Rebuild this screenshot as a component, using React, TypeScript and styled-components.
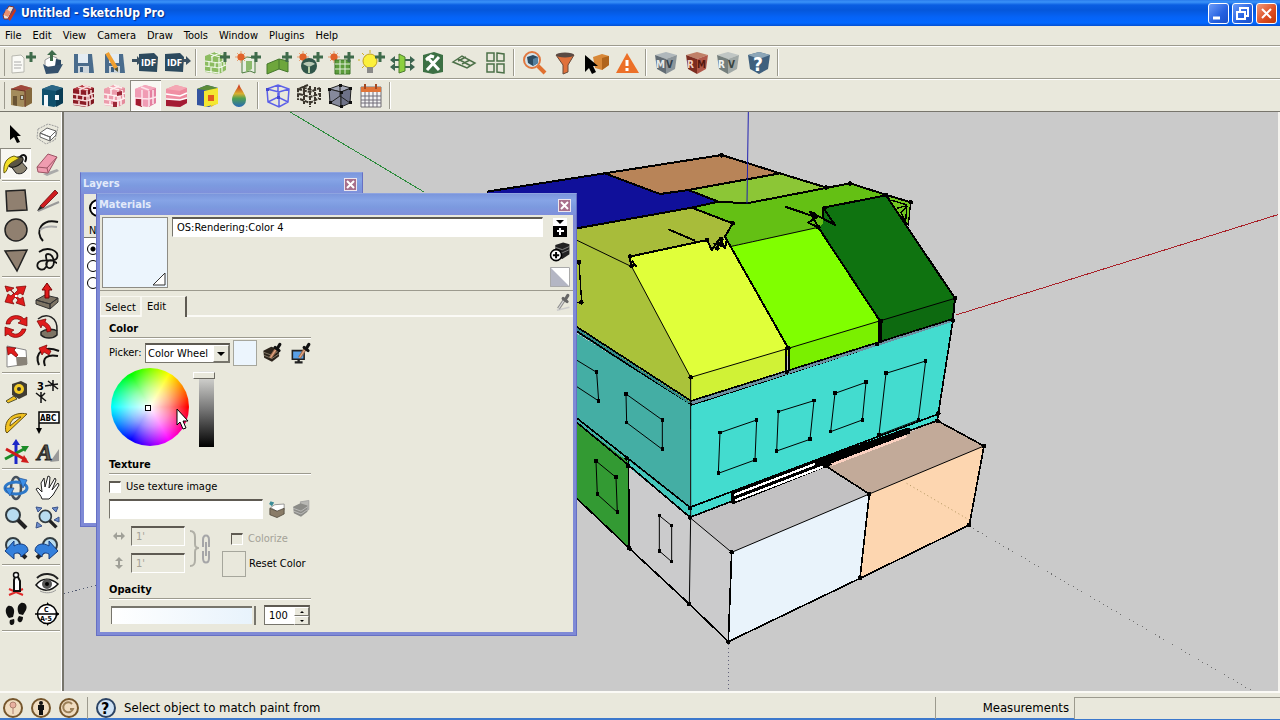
import React, { ReactNode } from "react";
import styled, { createGlobalStyle, css } from "styled-components";

const face = "#e9e8dc";
const shade = "#9c9a8e";
const ui = `"DejaVu Sans Condensed", "DejaVu Sans", sans-serif`;

const GlobalStyle = createGlobalStyle`
  *, *::before, *::after { box-sizing: border-box; }
  body { margin: 0; background: ${face}; font-family: ${ui}; font-size: 11px; line-height: 14px; color: #000; }
  button, input, select { font: inherit; color: inherit; margin: 0; }
  svg { display: block; }
`;

/* ---------- window frame ---------- */
const AppWindow = styled.div`
  display: flex;
  flex-direction: column;
  min-height: 100vh;
  border-bottom: 2px solid #3c78cc;
`;
const TitleBar = styled.header`
  display: flex;
  align-items: center;
  gap: 4px;
  height: 26px;
  padding: 0 3px 0 1px;
  background: linear-gradient(#2a7cec 0, #3a92f8 2px, #0a5ee2 5px, #0557da 10px, #0563f6 17px, #0268ff 23px, #0550d0 26px);
`;
const AppTitle = styled.h1`
  flex: 1;
  margin: 0;
  font-size: 12px;
  line-height: 18px;
  font-weight: bold;
  color: #fff;
  text-shadow: 1px 1px 1px #0a2a80;
`;
const CaptionButtons = styled.div`
  display: flex;
  gap: 3px;
`;
const CaptionButton = styled.button<{ $danger?: boolean }>`
  width: 21px;
  height: 21px;
  padding: 0;
  border: 1px solid #fff;
  border-radius: 3px;
  background: ${(p) => (p.$danger ? "linear-gradient(135deg, #f09a7c, #dc4c20 60%, #c03808)" : "linear-gradient(135deg, #6c9cf8, #2460e0 60%, #1c50c8)")};
`;
const MenuBar = styled.nav`
  display: flex;
  align-items: center;
  gap: 11px;
  height: 19px;
  padding-left: 5px;
`;
const MenuItem = styled.button`
  padding: 0;
  border: 0;
  background: none;
  line-height: 14px;
`;
const Toolbar = styled.div`
  display: flex;
  height: 33px;
  padding-left: 4px;
  border-top: 1px solid ${shade};
  box-shadow: inset 0 1px #fff;
  padding-top: 1px;
`;
const Grip = styled.span`
  width: 2px;
  margin: 2px 0;
  border-left: 1px solid ${shade};
`;
const ToolSeparator = styled.span`
  width: 8px;
  margin: 2px 0;
  background: linear-gradient(90deg, transparent 3px, ${shade} 3px, ${shade} 4px, #fff 4px, #fff 5px, transparent 5px);
`;
const ToolButton = styled.button<{ $pressed?: boolean }>`
  display: grid;
  place-items: center;
  width: 31px;
  height: 31px;
  padding: 0;
  border: 0;
  background: none;
  ${(p) =>
    p.$pressed &&
    css`
      background: #f8f7f2;
      box-shadow: inset 1px 1px #8c8a80, inset -1px -1px #fff;
    `}
`;
const Workspace = styled.main`
  flex: 1;
  display: flex;
  border-top: 1px solid #77756c;
`;
const Sidebar = styled.aside`
  width: 64px;
  padding-top: 6px;
  border-right: 2px solid #77756c;
  background: linear-gradient(90deg, transparent 61px, #fff 61px);
`;
const ToolGrid = styled.div`
  display: grid;
  grid-template-columns: 31px 31px;
  grid-auto-rows: 30px;
  width: 62px;
  margin-bottom: 6px;
  position: relative;
  &::after {
    content: "";
    position: absolute;
    left: 2px;
    right: 2px;
    bottom: -4px;
    height: 2px;
    background: ${shade};
    border-bottom: 1px solid #fff;
  }
`;
const Viewport = styled.section`
  position: relative;
  flex: 1;
  min-width: 0;
  overflow: hidden;
  background: #cacaca;
  border-right: 2px solid #f4f3ee;
`;
const Scene = styled.svg`
  position: absolute;
  inset: 0;
  width: 100%;
  height: 100%;
`;

/* ---------- floating panels ---------- */
const Panel = styled.section<{ $x: number; $y: number; $w: number; $h: number }>`
  position: absolute;
  left: ${(p) => p.$x}px;
  top: ${(p) => p.$y}px;
  width: ${(p) => p.$w}px;
  height: ${(p) => p.$h}px;
  display: flex;
  flex-direction: column;
  padding: 0 3px 3px;
  border: 1px solid #6670c4;
  border-top-color: #8fa4e0;
  background: #7f8ad6;
`;
const PanelTitle = styled.header`
  flex: none;
  display: flex;
  align-items: center;
  justify-content: space-between;
  height: 21px;
  margin: 0 -3px;
  padding: 1px 5px 0 2px;
  background: linear-gradient(#7b96dc, #86a4e6 30%, #7c9adf 60%, #7f8fdb);
`;
const PanelHeading = styled.h2`
  margin: 0;
  font-size: 11px;
  line-height: 16px;
  color: #e2eafa;
`;
const PanelClose = styled.button`
  display: grid;
  place-items: center;
  width: 13px;
  height: 13px;
  padding: 0;
  border: 1px solid #eee6ee;
  background: #a8708c;
`;
const LayersBody = styled.div`
  flex: 1;
  background: #fff;
`;
const LayersTools = styled.div`
  height: 29px;
  padding: 5px;
  background: ${face};
`;
const RoundButton = styled.button`
  display: grid;
  place-items: center;
  width: 18px;
  height: 18px;
  padding: 0;
  border: 2px solid #000;
  border-radius: 50%;
  background: #fff;
`;
const LayersHead = styled.div`
  height: 15px;
  padding: 0 5px;
  line-height: 15px;
  background: ${face};
  border-bottom: 1px solid #77756c;
`;
const LayerRow = styled.label`
  display: flex;
  height: 17px;
  padding: 5px 3px 0;
`;
const LayerRadio = styled.input`
  appearance: none;
  width: 12px;
  height: 12px;
  border: 1px solid #000;
  border-radius: 50%;
  background: #fff;
  &:checked { background: radial-gradient(circle, #000 2px, #fff 3px); }
`;
const MaterialsBody = styled.form`
  flex: 1;
  background: ${face};
`;
const MaterialHead = styled.div`
  display: flex;
  gap: 4px;
  height: 76px;
  padding: 2px;
  border-bottom: 1px solid ${shade};
`;
const MaterialPreview = styled.div`
  width: 66px;
  height: 71px;
  display: flex;
  align-items: flex-end;
  justify-content: flex-end;
  border: 1px solid #8e8c84;
  background: #ecf5fd;
`;
const TextField = styled.input<{ $w?: number }>`
  ${(p) => (p.$w ? `width: ${p.$w}px;` : "flex: 1; min-width: 0;")}
  height: 20px;
  padding: 0 4px;
  border: 1px solid #fff;
  border-top: 2px solid #5e5a52;
  border-left: 1px solid #77756c;
  border-radius: 0;
  background: #fff;
  &:disabled { background: ${face}; color: #a4a298; }
`;
const IconStack = styled.div`
  display: flex;
  flex-direction: column;
  align-items: center;
  gap: 4px;
  width: 22px;
  margin-left: 2px;
`;
const IconButton = styled.button`
  display: grid;
  place-items: center;
  padding: 0;
  border: 0;
  background: none;
`;
const TabStrip = styled.div`
  display: flex;
  align-items: flex-end;
  height: 26px;
  padding: 0 2px 0 0;
  border-bottom: 2px solid #fbfaf6;
`;
const Tab = styled.button<{ $active?: boolean }>`
  width: ${(p) => (p.$active ? 46 : 41)}px;
  height: ${(p) => (p.$active ? 21 : 19)}px;
  margin-bottom: ${(p) => (p.$active ? -2 : 0)}px;
  padding: ${(p) => (p.$active ? "0 14px 0 0" : "4px 0 0")};
  border: 1px solid #f8f7f0;
  border-bottom: 0;
  border-right: ${(p) => (p.$active ? "2px solid #5e5a52" : "1px solid #f8f7f0")};
  background: ${face};
`;
const TabSpacer = styled.span`
  flex: 1;
`;
const EditPane = styled.div`
  width: 211px;
  padding: 5px 0 0 9px;
`;
const GroupHeading = styled.h3`
  margin: 0;
  height: 16px;
  border-bottom: 1px solid ${shade};
  box-shadow: 0 1px #fff;
  font-size: 11px;
  line-height: 14px;
`;
const PickerRow = styled.div`
  display: flex;
  align-items: center;
  gap: 3px;
  height: 30px;
`;
const PickerLabel = styled.label`
  flex: none;
  width: 33px;
  white-space: nowrap;
`;
const SelectBox = styled.span`
  position: relative;
  flex: none;
  width: 85px;
  height: 20px;
  border: 1px solid #77756c;
  border-top: 2px solid #5e5a52;
  background: #fff;
`;
const PickerSelect = styled.select`
  appearance: none;
  width: 100%;
  height: 17px;
  padding: 0 0 0 2px;
  border: 0;
  border-radius: 0;
  background: none;
  line-height: 15px;
`;
const SelectArrow = styled.span`
  position: absolute;
  right: 0;
  top: 0;
  display: grid;
  place-items: center;
  width: 16px;
  height: 17px;
  background: ${face};
  border: 1px solid #fff;
  border-right-color: #77756c;
  border-bottom-color: #77756c;
  pointer-events: none;
`;
const Swatch = styled.button<{ $color: string }>`
  flex: none;
  width: 24px;
  height: 26px;
  padding: 0;
  border: 1px solid #a6a69c;
  background: ${(p) => p.$color};
`;
const PickerTools = styled.span`
  display: flex;
  flex: none;
  gap: 7px;
  margin-left: 1px;
`;
const WheelRow = styled.div`
  display: flex;
  gap: 4px;
  height: 90px;
  padding-left: 2px;
`;
const Wheel = styled.div`
  position: relative;
  width: 78px;
  height: 78px;
  border-radius: 50%;
  background: radial-gradient(circle, #fff 0, rgba(255, 255, 255, 0.55) 35%, transparent 68%),
    conic-gradient(from 90deg, #f00, #f0f, #00f, #0ff, #0f0, #ff0, #f00);
`;
const WheelMark = styled.span`
  position: absolute;
  left: 34px;
  top: 37px;
  width: 6px;
  height: 6px;
  border: 1px solid #000;
  background: #fff;
`;
const Cursor = styled.svg`
  position: absolute;
  left: 65px;
  top: 40px;
`;
const ValueSlider = styled.input`
  appearance: none;
  writing-mode: vertical-lr;
  direction: rtl;
  width: 22px;
  height: 76px;
  margin-top: 3px;
  background: linear-gradient(#e4e4e0, #777 50%, #000) 6px 0 / 15px 76px no-repeat;
  &::-webkit-slider-thumb {
    appearance: none;
    width: 22px;
    height: 7px;
    background: ${face};
    border: 1px solid #fff;
    border-right-color: #6c6a62;
    border-bottom-color: #6c6a62;
  }
`;
const CheckRow = styled.label<{ $disabled?: boolean }>`
  display: flex;
  align-items: center;
  gap: 5px;
  height: 25px;
  color: ${(p) => (p.$disabled ? "#a4a298" : "inherit")};
`;
const CheckBox = styled.input`
  appearance: none;
  width: 12px;
  height: 12px;
  border: 1px solid #fff;
  border-top: 2px solid #5e5a52;
  border-left: 1px solid #5e5a52;
  background: #fff;
  &:disabled { background: ${face}; }
`;
const FileRow = styled.div`
  display: flex;
  align-items: center;
  gap: 4px;
  height: 20px;
`;
const SizeBlock = styled.div`
  display: grid;
  grid-template-columns: 73px 12px 10px 1fr;
  gap: 2px;
  height: 64px;
  padding: 7px 0 0 3px;
`;
const SizeFields = styled.div`
  display: flex;
  flex-direction: column;
  gap: 7px;
`;
const SizeLabel = styled.label`
  display: flex;
  align-items: center;
  gap: 5px;
`;
const ColorizeColumn = styled.div`
  display: flex;
  flex-direction: column;
  padding-left: 9px;
`;
const ColorizeIndent = styled.div`
  padding-left: 9px;
`;
const ResetRow = styled.label`
  display: flex;
  align-items: center;
  gap: 3px;
  white-space: nowrap;
`;
const OpacityRow = styled.div`
  display: flex;
  align-items: center;
  gap: 8px;
  height: 32px;
  padding-left: 2px;
`;
const OpacitySlider = styled.input`
  appearance: none;
  width: 145px;
  height: 19px;
  margin: 0;
  background:
    linear-gradient(#77756c, #77756c) 0 0 / 141px 2px no-repeat,
    linear-gradient(#77756c, #77756c) 0 0 / 1px 18px no-repeat,
    linear-gradient(90deg, #fff, #e8f3fc) 0 0 / 141px 18px no-repeat;
  &::-webkit-slider-thumb {
    appearance: none;
    width: 2px;
    height: 19px;
    background: #77756c;
  }
`;
const Spinner = styled.span`
  display: flex;
  width: 46px;
  height: 20px;
  border: 1px solid #77756c;
  border-top: 2px solid #5e5a52;
  background: #fff;
`;
const SpinnerInput = styled.input`
  appearance: textfield;
  width: 29px;
  padding: 0 0 0 4px;
  border: 0;
  background: none;
  &::-webkit-inner-spin-button { display: none; }
`;
const SpinnerButtons = styled.span`
  display: grid;
  width: 15px;
`;
const SpinnerButton = styled.button`
  display: grid;
  place-items: center;
  height: 9px;
  padding: 0;
  border: 1px solid #fff;
  border-right-color: #77756c;
  border-bottom-color: #77756c;
  background: ${face};
`;

/* ---------- status bar ---------- */
const StatusBar = styled.footer`
  display: flex;
  align-items: center;
  gap: 7px;
  height: 27px;
  padding: 4px 0 0 2px;
  border-top: 2px solid #fbfaf6;
  font-size: 13px;
`;
const StatusIcons = styled.div`
  display: flex;
  gap: 6px;
  padding-right: 7px;
  border-right: 1px solid ${shade};
`;
const StatusText = styled.output`
  flex: 1;
`;
const Measure = styled.label`
  display: flex;
  align-items: center;
  justify-content: flex-end;
  gap: 5px;
  width: 345px;
  height: 22px;
  border-left: 1px solid ${shade};
`;
const MeasureInput = styled.input`
  width: 206px;
  height: 22px;
  border: 0;
  border-top: 1px solid ${shade};
  border-left: 1px solid ${shade};
  background: ${face};
`;

/* ---------- icon parts ---------- */
const G = "#3f6b4b";
const Icon = ({ children, size = 28 }: { children: ReactNode; size?: number }) => (
  <svg width={size} height={size} viewBox="0 0 28 28" fill="none" aria-hidden="true">
    {children}
  </svg>
);
const Plus = () => <path d="M23 3v10M18 8h10" stroke={G} strokeWidth="3" />;
const Sun = () => (
  <>
    <path d="M8 2v12M2 8h12M4 4l8 8M12 4l-8 8" stroke="#e8a070" />
    <circle cx="8" cy="8" r="3.6" fill="#e0622a" />
  </>
);
const Cube = ({ t, l, r, s }: { t: string; l: string; r: string; s?: string }) => (
  <g stroke={s}>
    <path d="M14 3l11 3-10 4-12-3z" fill={t} />
    <path d="M3 7l12 3v15L4 21z" fill={l} />
    <path d="M15 10l10-4-1 15-9 4z" fill={r} />
  </g>
);
const FrontCube = ({ t, l, r }: { t: string; l: string; r: string }) => (
  <>
    <path d="M3 7l10-4 11 3v15l-9 4-12-2z" fill={l} />
    <path d="M3 7l10-4 11 3-7 3z" fill={t} />
    <path d="M17 9l7-3v15l-7 4z" fill={r} />
  </>
);
const Floppy = () => (
  <>
    <path d="M4 5h18l2 19H4z" fill="#4a6c8c" />
    <path d="M8 5h10v9H8z" fill="#e4ecf2" />
    <path d="M8 17h11v7H8z" fill="#cdd6dc" />
    <path d="M10 18h3v5h-3z" fill="#3d5f80" />
  </>
);
const IdfPage = ({ x }: { x: number }) => (
  <>
    <path d={`M${x} 5l15-1 4 4-1 15-18-1z`} fill="#2c4a5e" />
    <text x={x + 2} y="17" fontSize="9" fontWeight="bold" fill="#fff">IDF</text>
  </>
);
const LetterCube = ({ c, a, b }: { c: string[]; a: string; b: string }) => (
  <>
    <path d="M14 3l11 3-11 4L3 6z" fill={c[0]} />
    <path d="M3 6l11 4v15L5 20z" fill={c[1]} />
    <path d="M25 6l-11 4v15l9-5z" fill={c[2]} />
    <text x="4" y="19" fontSize="10" fontWeight="bold" fill={c[3]}>{a}</text>
    <text x="14" y="19" fontSize="10" fontWeight="bold" fill={c[4]}>{b}</text>
  </>
);
const brickLines = "M3 12l14 2 7-3M3 17l14 2 7-3M3 22l14 2M10 8v5M7 13v5M13 14v5M9 18v6M17 9v16M21 8v5M19 14v4M22 13v4M20 18v5M8 5l10 3M13 3l8 3M18 4l-9 4";

type Tool = { name: string; icon: ReactNode; pressed?: boolean };

const fileTools: Tool[] = [
  { name: "New", icon: <><path d="M4 7l9-1 3 3v14l-12 1z" fill="#fafaf6" stroke="#b8b8b0" /><path d="M6 13h7M6 16h8M6 19h7" stroke="#aaa" /><Plus /></> },
  { name: "Open", icon: <><path d="M6 11l7-4 5 2v9H6z" fill="#fff" stroke="#999" /><path d="M17 10l5 1v6h-6z" fill="#2b4762" /><path d="M4 15l5 3 15-3-5 9-12 1z" fill="#34506c" /><path d="M13 1l5 5h-4v6h-3V6H8z" fill={G} /></> },
  { name: "Save", icon: <Floppy /> },
  { name: "Save As", icon: <><Floppy /><path d="M6 4l9 15" stroke="#f0a030" strokeWidth="4" /><path d="M13 20l4-2 0 5z" fill="#553" /></> },
  { name: "Import IDF", icon: <><IdfPage x={7} /><path d="M0 10h5V7l5 5-5 4v-3H0z" fill="#3a5060" /></> },
  { name: "Export IDF", icon: <><IdfPage x={2} /><path d="M19 10h4V7l5 5-5 4v-3h-4z" fill="#3a5060" /></> },
];
const modelTools: Tool[] = [
  { name: "New Space", icon: <><path d="M3 7l10-4 11 3v15l-7 4-14-2z" fill="#8cbc60" /><path d={brickLines} stroke="#f4faee" strokeWidth="1.2" /><Plus /></> },
  { name: "New Shading", icon: <><path d="M9 11l5-3 8 1v15l-5-2-8 2z" fill="#e8efe2" stroke="#4c7c40" /><path d="M13 12h6v8l-6 3z" fill="#8cba6c" /><Sun /><Plus /></> },
  { name: "New Interior Partition", icon: <><path d="M3 15l12-5 9 2v11l-9-3-12 5z" fill="#6ea63c" stroke="#44782c" /><path d="M15 10v10" stroke="#44782c" /><Plus /></> },
  { name: "New Illuminance Map", icon: <><Sun /><circle cx="14" cy="17" r="8" fill="#31564a" /><path d="M8 15c3-3 9-3 12 0l-6 3z" fill="#b8c8b4" /><path d="M14 18v6" stroke="#b8d0a8" strokeWidth="2" /><Plus /></> },
  { name: "New Daylighting Control", icon: <><Sun /><path d="M9 11h15v14H9z" fill="#5c9c3c" stroke="#3c7428" /><path d="M9 15h15M9 20h15M14 11v14M19 11v14" stroke="#e4f0dc" /><Plus /></> },
  { name: "New Luminaire", icon: <><circle cx="13" cy="12" r="7" fill="#fbf03c" stroke="#c0a020" /><path d="M10 18h6v6h-6z" fill="#8a8a88" /><path d="M13 1v3M3 11H1M5 4l2 2M5 19l2-2" stroke="#d0b020" /><Plus /></> },
  { name: "Surface Matching", icon: <><path d="M4 11h20M4 18h20" stroke="#3c6450" strokeWidth="2" /><path d="M2 11l5-4v8zM2 18l5-4v8zM27 11l-5-4v8zM27 18l-5-4v8z" fill="#3c6450" /><path d="M11 5l6 3v14l-6 2z" fill="#8cd040" stroke="#4c7c30" /></> },
  { name: "Set Attributes", icon: <><path d="M4 6l11-3 9 3v17l-10 2-10-2z" fill="#3c7044" /><path d="M8 8l12 13M20 8L8 21" stroke="#fff" strokeWidth="3" /><path d="M7 11l5-4 3 1" stroke="#fff" strokeWidth="3" /></> },
  { name: "Project Loose Geometry", icon: <path d="M3 13l9-6 13 7-8 5zM8 10l13 7M12 15l8-4M8 12l8-4" stroke="#4c7048" strokeWidth="1.5" /> },
  { name: "Make Four Views", icon: <path d="M6 4h7v8H6zM16 4l7 1v7h-7zM6 15h7v8H6zM16 15h7v9l-7-1z" stroke="#4c7048" strokeWidth="1.5" /> },
];
const searchTools: Tool[] = [
  { name: "Inspector", icon: <><circle cx="12" cy="11" r="8" fill="#d4e4ec" stroke="#e07840" strokeWidth="2" /><path d="M7 8l6-2 5 2v6l-5 3-5-3z" fill="#2c4a60" /><path d="M13 10v7l5-3V8z" fill="#5480a0" /><path d="M18 17l7 7" stroke="#e07030" strokeWidth="4" /></> },
  { name: "Filter", icon: <><path d="M5 6l7 10v9l5-2v-7l6-10z" fill="#e0703a" stroke="#6a4a38" /><ellipse cx="14" cy="6" rx="9" ry="2.5" fill="#5a4a44" /></> },
  { name: "Object Picker", icon: <><path d="M11 8l9-3 7 2v9l-7 5-7-2z" fill="#d88838" /><path d="M20 9l7-2v9l-7 5z" fill="#b0641c" /><path d="M3 6v17l4-4 3 6 4-2-3-6h5z" fill="#000" /></> },
  { name: "Warnings", icon: <><path d="M14 4l12 20H3z" fill="#ec7028" /><path d="M14 11v6M14 19v3" stroke="#fff" strokeWidth="3" /></> },
];
const viewTools: Tool[] = [
  { name: "Model View", icon: <LetterCube c={["#b0b8bc", "#626c74", "#8c959a", "#e4e8ea", "#34424c"]} a="M" b="V" /> },
  { name: "Run Model", icon: <LetterCube c={["#c08068", "#7c2c20", "#b0584a", "#f0d0c4", "#541810"]} a="R" b="M" /> },
  { name: "Run Viewer", icon: <LetterCube c={["#c0c6c4", "#747e7c", "#a0a8a6", "#f0f4f4", "#38443e"]} a="R" b="V" /> },
  { name: "Help", icon: <><path d="M14 3l11 3-2 14-9 5-9-5L3 6z" fill="#3f607e" /><path d="M14 3l11 3-11 4L3 6z" fill="#8ca6b8" /><text x="8" y="22" fontSize="19" fontWeight="bold" fill="#fff">?</text></> },
];
const renderTools: Tool[] = [
  { name: "Render by Class", icon: <><FrontCube t="#a0483c" l="#a48c5c" r="#84683c" /><path d="M5 14h4v10l-4-1zM12 13h4v5h-4z" fill="#6a5434" /><path d="M13 14h2v3h-2z" fill="#c8d0d0" /><path d="M3 7l14 2v16" stroke="#6c3428" /></> },
  { name: "Render by Boundary", icon: <><FrontCube t="#2c6888" l="#10506c" r="#0a3c54" /><path d="M5 13h4v12l-4-1zM16 13h4v5h-4z" fill="#f4f8fa" /></> },
  { name: "Render by Surface Type", icon: <><FrontCube t="#b83c44" l="#8c1c26" r="#801820" /><path d={brickLines} stroke="#f8dcdc" strokeWidth="1.5" /></> },
  { name: "Render by Normal", icon: <><FrontCube t="#f0a4b0" l="#ec9cac" r="#e48c9c" /><path d={brickLines} stroke="#fdf0f0" strokeWidth="1.5" /><path d="M16 10l5-1v4l-5 1zM12 20h4v5h-4z" fill="#9c2838" /></> },
  { name: "Render by Space", pressed: true, icon: <><FrontCube t="#f4a8bc" l="#f09cb4" r="#e480a0" /><path d="M4 16l6 1v8l-6-2z" fill="#a01c30" /><path d="M3 16l14 1 7-2M10 8v16M17 9v15M9 5l8 3M21 8v14" stroke="#fce4ea" strokeWidth="1.5" /></> },
  { name: "Render by Story", icon: <><FrontCube t="#f4a8b4" l="#f090a4" r="#ec889c" /><path d="M3 17l14 1 7-2v5l-7 4-14-1z" fill="#a41c34" /><path d="M3 12l14 2 7-3M3 17l14 1 7-2" stroke="#fff" strokeWidth="1.5" /></> },
  { name: "Render by Construction", icon: <><FrontCube t="#5c8c38" l="#3454a0" r="#e8b82c" /><path d="M10 9l14-3v16l-14 3z" fill="#f4e830" /><path d="M14 13h6v6h-6z" fill="#e05c20" /></> },
  { name: "Render by Data", icon: <><defs><linearGradient id="drop" x1="0" y1="0" x2="0" y2="1"><stop stopColor="#d04020" offset=".1" /><stop stopColor="#d8b030" offset=".42" /><stop stopColor="#50a050" offset=".62" /><stop stopColor="#2868b8" offset="1" /></linearGradient></defs><path d="M14 2c2 6 7 10 7 16a7 7 0 0 1-14 0c0-6 5-10 7-16z" fill="url(#drop)" /></> },
];
const wireTools: Tool[] = [
  { name: "Wireframe", icon: <><path d="M3 7l11-4 11 4-1 13-9 5-11-5zM3 7l12 3 10-3M15 10v15M14 3v12M4 20l10-5 10 5" stroke="#5c60e8" strokeWidth="1.5" /><path d="M2 6h3v3H2zM13 14h3v3h-3z" fill="#4448d0" /></> },
  { name: "Hidden Line", icon: <><path d="M3 7l12 3 10-4M4 12l11 3 9-3M5 17l10 4 9-5M8 5l11 4M9 4v18M15 4v21M20 5v17M13 3L3 7v11M25 6v12" stroke="#3a352c" strokeWidth="2" strokeDasharray="4 1" /></> },
  { name: "X-Ray", icon: <><Cube t="#a4a8b8" l="#85899c" r="#6e7288" s="#222" /><path d="M4 21l10-7 10 7M14 14V3" stroke="#222" /><path d="M2 6h3v3H2zM14 9h3v3h-3zM23 5h3v3h-3zM14 23h3v3h-3zM13 2h3v3h-3zM3 19h3v3H3zM23 19h3v3h-3z" fill="#111" /></> },
  { name: "Schedules", icon: <><path d="M4 5h20v20H4z" fill="#f4f4f4" stroke="#706c70" /><path d="M4 5h20v5H4z" fill="#e07438" /><path d="M4 14h20M4 18h20M4 21h20M8 10v15M12 10v15M16 10v15M20 10v15" stroke="#706c78" /><path d="M8 2v5M19 2v5" stroke="#a44820" strokeWidth="2" /></> },
];

const Loupe = () => (
  <>
    <circle cx="11" cy="11" r="7" fill="#b8dcf0" stroke="#333c40" strokeWidth="2" />
    <path d="M16 16l8 8" stroke="#222" strokeWidth="4" />
  </>
);
const ReturnArrow = () => (
  <path d="M3 17l9-10v5c6-4 14-2 14 5l-7 6c0-4-3-5-7-3v5z" fill="#3480dc" stroke="#143c80" />
);
const sideTools: Tool[][] = [
  [
    { name: "Select", icon: <path d="M8 5v15l4-3 3 6 3-1-3-6h4z" fill="#000" /> },
    { name: "Make Component", icon: <><path d="M5 9l10-5 10 3-3 13-9 4-9-6z" stroke="#999" strokeDasharray="2 1" /><path d="M7 13l7-5 9 3-6 6zM7 13v4l10 4v-4zM17 17l6-6v4l-6 6z" fill="#fff" stroke="#666" /></> },
    { name: "Paint Bucket", pressed: true, icon: <><path d="M17 9l8 9c-2 5-7 7-11 5l-6-8z" fill="#8a8270" stroke="#222" /><ellipse cx="14" cy="12" rx="8" ry="4" transform="rotate(-30 14 12)" fill="#5a5444" stroke="#111" /><path d="M12 6c-8 2-11 8-10 17 3-1 3-5 5-8s8-5 10-7z" fill="#f4e028" stroke="#665c10" /><path d="M18 7c4-4 8-1 5 5" stroke="#111" strokeWidth="2" /></> },
    { name: "Eraser", icon: <><path d="M10 24l14-5 2 2-12 5z" fill="#aaa" /><path d="M4 17L15 4l9 3-9 16-10-1z" fill="#f09cb0" stroke="#9c5464" /><path d="M4 17l10 1 10-11M14 18l1 4" stroke="#9c5464" /></> },
  ],
  [
    { name: "Rectangle", icon: <path d="M4 5l19-1 2 20-20 1z" fill="#908070" stroke="#222" strokeWidth="1.5" /> },
    { name: "Line", icon: <><path d="M5 25l21-9" stroke="#999" strokeWidth="2" /><path d="M7 20L22 4l3 3L10 22z" fill="#d01c20" stroke="#500" strokeWidth=".7" /><path d="M7 20l3 2-6 3z" fill="#222" /></> },
    { name: "Circle", icon: <circle cx="14" cy="14" r="11" fill="#908070" stroke="#222" strokeWidth="1.5" /> },
    { name: "Arc", icon: <><path d="M10 25C1 15 9 2 25 6" stroke="#111" strokeWidth="2" /><path d="M7 14c5-4 10-4 17-3" stroke="#aaa" strokeWidth="2" /></> },
    { name: "Polygon", icon: <path d="M3 5l22-1-10 21z" fill="#908070" stroke="#222" strokeWidth="1.5" /> },
    { name: "Freehand", icon: <path d="M6 6c8-6 21-2 18 6-3 6-15-1-19 5-3 6 5 9 8 4 3-6-3-13 2-13s8 9 4 13-8-3-4-6 7 2 9 2" stroke="#111" strokeWidth="1.8" /> },
  ],
  [
    { name: "Move", icon: <><path d="M3 4l9 2-3 2 3 4 4-4-2-3 10-1-3 9-3-2-4 3 4 3 3-2 2 9-9-3 2-3-3-3-3 4 2 3-9-2 3-8 3 2 3-3-4-3-3 2z" fill="#e01c1c" stroke="#700" strokeWidth=".7" /><path d="M13 13h2v2h-2z" fill="#fff" /></> },
    { name: "Push/Pull", icon: <><path d="M3 18l9-5 13 3-8 6zM3 18v4l14 5v-5zM17 22l8-6v4l-8 7z" fill="#7d7464" stroke="#333" /><path d="M14 1l5 7h-3v8h-4V8H9z" fill="#e01c1c" stroke="#700" /></> },
    { name: "Rotate", icon: <><path d="M4 12C5 3 17 1 22 7l3-2v9l-9-3 3-2C15 5 9 7 8 12z" fill="#e01c1c" stroke="#700" strokeWidth=".7" /><path d="M24 17c-2 9-13 11-18 5l-3 2v-9l9 3-3 2c4 4 9 2 11-3z" fill="#e01c1c" stroke="#700" strokeWidth=".7" /></> },
    { name: "Follow Me", icon: <><path d="M8 20c4-3 12-4 16-1v4c-4 4-12 4-16 0z" fill="#7d7464" stroke="#222" strokeWidth="1.5" /><path d="M5 7c9-7 20-2 19 12" stroke="#222" strokeWidth="1.5" /><path d="M4 9l9-2-1 3c4 2 6 5 6 9l-4 1c0-4-2-6-5-7l-1 3z" fill="#e01c1c" stroke="#700" strokeWidth=".7" /></> },
    { name: "Scale", icon: <><path d="M5 4l19 4 1 14-20 3z" fill="#fff" stroke="#888" /><path d="M14 15h11v8l-10 1z" fill="#888278" /><path d="M5 5l9 1-2 2 4 5-2 2-5-4-3 2z" fill="#e01c1c" stroke="#700" strokeWidth=".7" /></> },
    { name: "Offset", icon: <><path d="M6 23C1 11 10 3 26 9M12 24c-3-8 2-12 13-10" stroke="#111" strokeWidth="2" /><path d="M6 6l8-3-1 3 5 3-2 4-5-3-2 3z" fill="#e01c1c" stroke="#700" strokeWidth=".7" /></> },
  ],
  [
    { name: "Tape Measure", icon: <><path d="M10 6l9-3 6 3v11l-8 4-7-4z" fill="#403c34" /><circle cx="17" cy="11" r="5" fill="#f4cc28" /><circle cx="17" cy="11" r="2" fill="#333" /><path d="M12 18l-8 5 2 2 9-4z" fill="#f0c020" stroke="#553" /></> },
    { name: "Dimension", icon: <><path d="M3 15l10 8M15 3l10 8M8 19l4-4M17 8l3-3M8 14v11M20 2v11M12 8l13-2" stroke="#111" strokeWidth="1.5" /><text x="4" y="12" fontSize="11" fontWeight="bold" fill="#000">3</text></> },
    { name: "Protractor", icon: <><path d="M4 24C1 12 12 3 25 6L5 25z" fill="#f0c020" stroke="#665010" /><path d="M8 18c0-6 5-9 11-9z" fill={face} stroke="#665010" /></> },
    { name: "Text", icon: <><path d="M6 4h20v11H6zM6 15v8" fill="#fff" stroke="#000" strokeWidth="1.5" /><path d="M3 20h6l-3 6z" fill="#000" /><text x="7" y="13" fontSize="8" fontWeight="bold" fill="#000">ABC</text></> },
    { name: "Axes", icon: <><path d="M14 26V5" stroke="#1c28c8" strokeWidth="3" /><path d="M10 7l4-6 4 6z" fill="#1c28c8" /><path d="M3 21l19-10" stroke="#1c8c28" strokeWidth="3" /><path d="M4 11l20 11" stroke="#d01c1c" strokeWidth="3" /><path d="M22 17l5 8-8-1z" fill="#d01c1c" /><path d="M19 8l8 0-4 6z" fill="#1c8c28" /></> },
    { name: "3D Text", icon: <><path d="M17 24l9-13v12z" fill="#999" /><text x="4" y="22" fontFamily="Liberation Serif" fontSize="23" fontWeight="bold" fontStyle="italic" fill="#60594c" stroke="#222">A</text></> },
  ],
  [
    { name: "Orbit", icon: <><ellipse cx="14" cy="14" rx="5" ry="11" stroke="#45505c" strokeWidth="2.5" /><ellipse cx="14" cy="14" rx="11" ry="6" stroke="#2d78c8" strokeWidth="3" /><path d="M3 14l5 8 4-8zM17 4l8 2-4 8z" fill="#3c90e8" stroke="#1c4c90" strokeWidth=".7" /></> },
    { name: "Pan", icon: <path d="M9 25c-1-4-4-6-6-10l2-1 4 4-1-9 3-5 1 9 3-11 2 1-1 11 6-10 1 2-4 10 6-7 1 2-6 10-4 4z" fill="#fff" stroke="#222" /> },
    { name: "Zoom", icon: <Loupe /> },
    { name: "Zoom Extents", icon: <><g transform="translate(3 3) scale(.85)"><Loupe /></g><path d="M3 3l6 1-4 4zM25 3l-6 1 4 4zM3 24l1-6 5 4zM26 13l-5 3 5 2z" fill="#6c8ccc" stroke="#3c5488" /></> },
    { name: "Previous View", icon: <><Loupe /><ReturnArrow /></> },
    { name: "Next View", icon: <g transform="matrix(-1 0 0 1 28 0)"><Loupe /><ReturnArrow /></g> },
  ],
  [
    { name: "Position Camera", icon: <><path d="M7 19l14 6M21 19L7 25" stroke="#e02828" strokeWidth="2" /><path d="M12 21V10l1-3h3l2 4v10z" fill="#fff" stroke="#111" strokeWidth="2" /><circle cx="14" cy="5" r="2.5" fill="#fff" stroke="#111" strokeWidth="1.5" /></> },
    { name: "Look Around", icon: <><path d="M4 8c6-6 16-5 21 1" stroke="#222" strokeWidth="2" /><path d="M3 15c6-8 15-7 22-1-7 8-16 8-22 1z" fill="#fff" stroke="#111" strokeWidth="1.5" /><circle cx="14" cy="14" r="5" fill="#555" /><circle cx="14" cy="14" r="2" fill="#000" /><path d="M7 21c6 3 12 2 16-1" stroke="#999" /></> },
    { name: "Walk", icon: <><path d="M6 6c4-1 7 3 6 7l-1 4-4 1c-3-3-5-9-1-12zM8 20l4-1c1 3 0 6-2 6s-3-2-2-5zM19 3c4-1 7 3 5 7l-3 5-4-1c-2-4-2-9 2-11zM17 16l4 1c0 4-2 6-4 5s-2-3 0-6z" fill="#111" /></> },
    { name: "Section Plane", icon: <><path d="M14 2l12 12-12 12z" fill="#000" /><circle cx="14" cy="14" r="9.500" fill="#fff" stroke="#000" strokeWidth="1.5" /><path d="M2 14h24" stroke="#000" strokeWidth="1.5" /><text x="11" y="12" fontSize="7" fontWeight="bold" fill="#000">C</text><text x="7" y="21" fontSize="7" fontWeight="bold" fill="#000">A-5</text></> },
  ],
];

const ToolSet = ({ tools }: { tools: Tool[] }) => (
  <>
    {tools.map((t) => (
      <ToolButton key={t.name} type="button" aria-label={t.name} aria-pressed={t.pressed} $pressed={t.pressed}>
        <Icon>{t.icon}</Icon>
      </ToolButton>
    ))}
  </>
);

/* ---------- model drawing ---------- */
const Win = ({ p }: { p: string }) => {
  const corners = p.split(" ").map((c) => c.split(",").map(Number));
  return (
    <>
      <polygon points={p} fill="none" stroke="#000" strokeWidth="3" />
      {corners.map(([x, y]) => <rect key={`${x}-${y}`} x={x - 5} y={y - 6} width="10" height="11" />)}
    </>
  );
};
const Dots = ({ at }: { at: number[][] }) => (
  <>{at.map(([x, y]) => <circle key={`${x}-${y}`} cx={x} cy={y} r="7" />)}</>
);
const Model = () => (
  <Scene aria-label="Building model" role="img" shapeRendering="crispEdges">
    <g strokeWidth="1" fill="none">
      <path d="M226 0L360 80" stroke="#2c8c3c" />
      <path d="M892 203L1216 102L1600-18" stroke="#a82028" />
      <path d="M905 414L1190 580L1600 820" stroke="#707070" strokeDasharray="1 4" />
      <path d="M0 482L32 473" stroke="#505870" strokeDasharray="1 3" />
      <path d="M665 532L663 640" stroke="#606078" strokeDasharray="1 3" />
    </g>
    <g transform="translate(416 28) scale(.33333)" strokeLinejoin="round">
      <path d="M1220 165L1292 187 1285 255 1250 215z" fill="#72c820" stroke="#000" strokeWidth="4" />
      <path d="M1232 180l50 15M1250 205l30-8-3 50-14-30 20-18" stroke="#000" strokeWidth="4" fill="none" />
      <path d="M20 155L374 100 540 162 625 150 715 185 635 203 290 265 20 310z" fill="#10109a" />
      <path d="M374 100L725 45 900 100 625 150 540 162z" fill="#b88458" />
      <path d="M625 150L900 100 1040 143 800 190 715 185z" fill="#8cc636" />
      <path d="M635 203L715 185 800 190 1110 130 1220 165 1100 300 1015 262 745 320 735 292 758 250z" fill="#64c014" />
      <path d="M285 266L635 203 758 250 735 292 700 330 682 300 448 350 455 380 285 298z" fill="#a8bc3a" />
      <path d="M285 298L455 380 632 712 632 788 285 560z" fill="#aac23a" />
      <path d="M448 350L682 300 700 330 735 295 750 320 925 625 632 712 455 380z" fill="#e0ff3a" />
      <path d="M632 712L925 625 918 690 632 784z" fill="#d0f236" />
      <path d="M750 320L1015 262 1200 543 925 625z" fill="#80ff00" />
      <path d="M926 625L1200 543 1196 608 926 690z" fill="#7af000" />
      <path d="M1030 203L1218 166 1425 475 1200 543 1015 262 1030 250z" fill="#0f7310" />
      <path d="M1200 543L1425 475 1418 538 1200 606z" fill="#0d6a10" />
      <path d="M285 560L632 786 632 800 285 575z" fill="#338a88" />
      <path d="M632 782L1418 538 1418 548 632 797z" fill="#6d8fa0" />
      <g fill="none" stroke="#000" strokeWidth="3">
        <path d="M285 298L455 380 632 712 925 625M750 320L1015 262M925 625L1425 475M632 712V795" />
      </g>
      <g fill="none" stroke="#000" strokeWidth="6">
        <path d="M20 155L374 100 725 45 900 100 1040 143M374 100L540 162 625 150 900 100M625 150L715 185 800 190 1110 130 1220 165 1292 187M285 266L635 203 715 185M635 203L758 250 735 290 925 625M455 380L448 350 682 300 695 330 720 295 735 325 740 300M565 268L645 302M915 200L1010 232 985 248 1015 262 990 215 1065 255 1030 203 1218 166 1425 475 1418 545M1015 262L1200 543M455 362l15 20M700 310l30 10M1030 210v28" />
      </g>
      <g fill="none" stroke="#000" strokeWidth="5">
        <path d="M285 557L632 782M285 570L632 797 1418 549M632 783L1418 537" />
      </g>
      <path d="M918 622V690M927 622V690M1196 543V610M1204 543V610" stroke="#000" strokeWidth="6" />
      <Dots at={[[725, 46], [682, 300], [758, 250], [450, 350], [455, 378], [632, 712], [632, 795], [925, 625], [920, 695], [1203, 543], [1192, 612], [1425, 475], [1418, 542], [1218, 166], [1292, 187], [1110, 131], [1038, 143], [720, 312], [712, 325], [724, 298], [1033, 205], [1000, 222], [1015, 262]]} />
      <path d="M805 -84L801 190" stroke="#2020b0" strokeWidth="3" />
      <path d="M285 367h12l8 120h-20" stroke="#000" strokeWidth="4" fill="none" />
      <Dots at={[[297, 367], [304, 487]]} />
    </g>
    <g transform="translate(496 238) scale(.33333)" strokeLinejoin="round">
      <path d="M392 168L1178-85 1165 0 1135 190 1132 212 392 500z" fill="#43dccf" />
      <path d="M45-53L392 165 390 500 45 230z" fill="#44aea4" />
      <path d="M45 205L200 325 205 350 390 500V475L200 328z" fill="#44c8bc" />
      <path d="M45 213L204 335 208 592 45 440z" fill="#339a33" />
      <path d="M205 350L390 503 515 607 505 875 388 762 208 595z" fill="#cbcbcc" />
      <path d="M390 503L800 350 928 432 515 607z" fill="#c2c1c2" />
      <path d="M515 607L928 432 900 685 505 875z" fill="#e9f3fb" />
      <path d="M800 350L1132 212 1272 288 928 432z" fill="#c2aa99" />
      <path d="M928 432L1272 288 1228 525 900 685z" fill="#fdd6b0" />
      <path d="M815 318L1135 200" stroke="#43dccf" strokeWidth="8" />
      <g fill="none" stroke="#000" strokeWidth="3">
        <path d="M392 160V500L388 762M390 503L515 607 928 432 1272 288" />
      </g>
      <g fill="none" stroke="#000" strokeWidth="5">
        <path d="M1178-85L1165 0 1135 190 1132 212 1272 288 1228 525 900 685 505 875 388 762 208 595 45 440M515 607L505 875M45 200L200 322 390 472 1135 192M45 213L205 345 390 502 512 455M205 325L208 595M800 350L928 432 900 685M800 330L1132 212" />
      </g>
      <path d="M512 428L790 322 1045 232 1050 250 800 350 515 464z" fill="#000" />
      <path d="M522 435L765 342M526 451L788 350" stroke="#fff" strokeWidth="7" />
      <path d="M815 344L1040 258" stroke="#fad0c0" strokeWidth="8" />
      <path d="M1040 400L1228 510" stroke="#b0945c" strokeWidth="3" strokeDasharray="3 9" />
      <Win p="480,248 590,210 585,330 475,370" />
      <Win p="655,185 762,152 750,268 650,303" />
      <Win p="825,130 918,97 907,210 812,245" />
      <Win p="978,70 1097,33 1075,210 957,255" />
      <Win p="198,132 307,210 307,298 200,218" />
      <Win p="20,12 110,67 116,153 20,90" />
      <Win p="108,333 168,382 172,487 112,433" />
      <Win p="298,497 335,527 335,635 298,603" />
      <Dots at={[[390, 475], [390, 503], [515, 607], [505, 875], [388, 762], [208, 595], [928, 432], [900, 685], [1272, 288], [1228, 525], [1135, 190], [1132, 212], [200, 325], [205, 348], [785, 330], [800, 348], [1045, 240]]} />
    </g>
  </Scene>
);

/* ---------- panels ---------- */
const CloseX = () => (
  <svg width="9" height="9" viewBox="0 0 9 9"><path d="M1 1l7 7M8 1L1 8" stroke="#fff" strokeWidth="2" /></svg>
);
const Layers = () => (
  <Panel $x={16} $y={60} $w={283} $h={355} aria-label="Layers">
    <PanelTitle>
      <PanelHeading>Layers</PanelHeading>
      <PanelClose type="button" aria-label="Close Layers"><CloseX /></PanelClose>
    </PanelTitle>
    <LayersBody>
      <LayersTools>
        <RoundButton type="button" aria-label="Add layer">
          <svg width="10" height="10" viewBox="0 0 10 10"><path d="M5 0v10M0 5h10" stroke="#000" strokeWidth="2" /></svg>
        </RoundButton>
      </LayersTools>
      <LayersHead>N</LayersHead>
      {[0, 1, 2].map((i) => (
        <LayerRow key={i}><LayerRadio type="radio" name="layer" aria-label={`Layer ${i}`} defaultChecked={i === 0} /></LayerRow>
      ))}
    </LayersBody>
  </Panel>
);
const BrickIcon = ({ dim }: { dim?: boolean }) => (
  <>
    <path d="M3 11l10-5 10 3v9l-9 7-10-5z" fill={dim ? "#8c8c88" : "#2c241c"} />
    <path d="M3 13l11 4 9-6M4 17l10 4 9-6" stroke={dim ? "#ccc" : "#988c78"} />
  </>
);
const Dropper = ({ dim }: { dim?: boolean }) => (
  <>
    <path d="M12 20l8-12" stroke={dim ? "#8c8c8c" : "#a07050"} strokeWidth="4" />
    <path d="M12 20l8-12" stroke={dim ? "#ddd" : "#e8a888"} strokeWidth="1.5" />
    <path d="M18 7l5 4M21 8l3-5" stroke={dim ? "#666" : "#111"} strokeWidth="4" strokeLinecap="round" />
  </>
);
const Materials = () => (
  <Panel $x={32} $y={81} $w={481} $h={443} aria-label="Materials">
    <PanelTitle>
      <PanelHeading>Materials</PanelHeading>
      <PanelClose type="button" aria-label="Close Materials"><CloseX /></PanelClose>
    </PanelTitle>
    <MaterialsBody onSubmit={(e) => e.preventDefault()}>
      <MaterialHead>
        <MaterialPreview>
          <svg width="15" height="15" viewBox="0 0 15 15"><path d="M1 13L13 1v12z" fill="#fff" stroke="#333" /></svg>
        </MaterialPreview>
        <TextField aria-label="Material name" defaultValue="OS:Rendering:Color 4" />
        <IconStack>
          <IconButton type="button" aria-label="Secondary pane">
            <svg width="14" height="20" viewBox="0 0 14 20"><path d="M0 1h14v9H0z" fill="#fff" /><path d="M3 3h8L7 7zM0 9h14v11H0z" fill="#000" /><path d="M7 11v7M4 14h7" stroke="#fff" strokeWidth="2" /></svg>
          </IconButton>
          <IconButton type="button" aria-label="Create material">
            <Icon size={22}><path d="M8 5l10-3 8 2v13l-9 6-9-4z" fill="#222" /><path d="M8 8l9 3 9-4M8 12l9 3 9-4" stroke="#999" /><circle cx="9" cy="18" r="7" fill="#fff" stroke="#000" strokeWidth="2" /><path d="M9 14v8M5 18h8" stroke="#000" strokeWidth="2.5" /></Icon>
          </IconButton>
          <IconButton type="button" aria-label="Default material">
            <svg width="20" height="20" viewBox="0 0 20 20"><path d="M0 0h20v20H0z" fill="#fff" /><path d="M0 0l20 20H0z" fill="#b4b6c4" /><path d="M.5.5h19v19H.5z" fill="none" stroke="#aaa" /></svg>
          </IconButton>
        </IconStack>
      </MaterialHead>
      <TabStrip>
        <Tab type="button">Select</Tab>
        <Tab type="button" $active>Edit</Tab>
        <TabSpacer />
        <IconButton type="button" aria-label="Sample paint"><Icon size={22}><path d="M10 22l16-4" stroke="#ccc" strokeWidth="2" /><Dropper dim /></Icon></IconButton>
      </TabStrip>
      <EditPane>
        <GroupHeading>Color</GroupHeading>
        <PickerRow>
          <PickerLabel htmlFor="picker">Picker:</PickerLabel>
          <SelectBox>
            <PickerSelect id="picker"><option>Color Wheel</option></PickerSelect>
            <SelectArrow><svg width="8" height="4" viewBox="0 0 8 4"><path d="M0 0h8L4 4z" /></svg></SelectArrow>
          </SelectBox>
          <Swatch type="button" aria-label="Current color" $color="#ecf5fd" />
          <PickerTools>
            <IconButton type="button" aria-label="Match color of object in model"><Icon size={22}><BrickIcon /><Dropper /></Icon></IconButton>
            <IconButton type="button" aria-label="Match color on screen"><Icon size={22}><path d="M3 11h15v11H3z" fill="#58a0e8" stroke="#222" strokeWidth="2" /><path d="M6 26h10M11 22v4" stroke="#222" strokeWidth="3" /><Dropper /></Icon></IconButton>
          </PickerTools>
        </PickerRow>
        <WheelRow>
          <Wheel>
            <WheelMark />
            <Cursor width="14" height="22" viewBox="0 0 14 22"><path d="M1 1v16l3-3 3 7 3-1-3-7h5z" fill="#fff" stroke="#000" /></Cursor>
          </Wheel>
          <ValueSlider type="range" aria-label="Brightness" defaultValue={98} />
        </WheelRow>
        <GroupHeading>Texture</GroupHeading>
        <CheckRow><CheckBox type="checkbox" />Use texture image</CheckRow>
        <FileRow>
          <TextField $w={155} aria-label="Texture file" />
          <IconButton type="button" aria-label="Browse"><Icon size={20}><path d="M5 12l6-4 13-1v8l-9 3z" fill="#fff" stroke="#777" /><path d="M4 13l10 4 10-4v8l-10 5-10-4z" fill="#8a7c68" stroke="#443c30" /><path d="M5 3l5 2-3 5-4-3z" fill="#3c8c98" /></Icon></IconButton>
          <IconButton type="button" aria-label="Edit texture image"><Icon size={20}><path d="M13 4l12-2v13l-10 3z" fill="#b8b8b4" stroke="#999" /><BrickIcon dim /></Icon></IconButton>
        </FileRow>
        <SizeBlock>
          <SizeFields>
            <SizeLabel><svg width="14" height="10" viewBox="0 0 14 10"><path d="M1 5l4-4v3h4V1l4 4-4 4V6H5v3z" fill="#a0a098" /></svg><TextField $w={54} disabled aria-label="Width" defaultValue="1'" /></SizeLabel>
            <SizeLabel><svg width="14" height="14" viewBox="0 0 14 14"><path d="M7 1l4 4H8v4h3l-4 4-4-4h3V5H3z" fill="#a0a098" /></svg><TextField $w={54} disabled aria-label="Height" defaultValue="1'" /></SizeLabel>
          </SizeFields>
          <svg width="12" height="46" viewBox="0 0 12 46"><path d="M3 5c4 0 5 2 5 6v6c0 3 0 4 3 5-3 1-3 2-3 5v7c0 4-1 6-5 6" fill="none" stroke="#b0afa6" strokeWidth="2" /></svg>
          <svg width="10" height="46" viewBox="0 0 10 46"><path d="M3 20H2v-6c0-6 6-6 6 0v6H7M3 26H2v6c0 6 6 6 6 0v-6H7M5 16v14" fill="none" stroke="#a6a6a8" strokeWidth="2" /></svg>
          <ColorizeColumn>
            <ColorizeIndent><CheckRow $disabled><CheckBox type="checkbox" disabled />Colorize</CheckRow></ColorizeIndent>
            <ResetRow><Swatch type="button" $color={face} />Reset Color</ResetRow>
          </ColorizeColumn>
        </SizeBlock>
        <GroupHeading>Opacity</GroupHeading>
        <OpacityRow>
          <OpacitySlider type="range" aria-label="Opacity" defaultValue={100} />
          <Spinner>
            <SpinnerInput type="number" aria-label="Opacity percent" defaultValue={100} />
            <SpinnerButtons>
              <SpinnerButton type="button" aria-label="Increase"><svg width="4" height="2"><path d="M0 2l2-2 2 2z" /></svg></SpinnerButton>
              <SpinnerButton type="button" aria-label="Decrease"><svg width="4" height="2"><path d="M0 0h4L2 2z" /></svg></SpinnerButton>
            </SpinnerButtons>
          </Spinner>
        </OpacityRow>
      </EditPane>
    </MaterialsBody>
  </Panel>
);

const Badge = ({ children }: { children: ReactNode }) => (
  <svg width="22" height="22" viewBox="0 0 22 22" fill="none">
    <circle cx="11" cy="11" r="9" fill="#f0dcc0" stroke="#75562c" strokeWidth="2" />
    {children}
  </svg>
);

export default function App() {
  return (
    <AppWindow>
      <GlobalStyle />
      <TitleBar>
        <svg width="16" height="18" viewBox="0 0 16 18"><path d="M2 11L8 2l5 1-6 12-4 0z" fill="#e8e0dc" stroke="#803028" /><path d="M7 15L14 4l1 3-6 10z" fill="#c83820" /><path d="M5 5l5 3-3 5-4-2z" fill="#e89070" /></svg>
        <AppTitle>Untitled - SketchUp Pro</AppTitle>
        <CaptionButtons>
          <CaptionButton type="button" aria-label="Minimize"><svg width="19" height="19"><path d="M4 14h7" stroke="#fff" strokeWidth="3" /></svg></CaptionButton>
          <CaptionButton type="button" aria-label="Restore"><svg width="19" height="19" fill="none"><path d="M7 7V4h8v8h-3M4 8h8v7H4z" stroke="#fff" strokeWidth="2" /></svg></CaptionButton>
          <CaptionButton type="button" aria-label="Close" $danger><svg width="19" height="19"><path d="M5 5l9 9M14 5l-9 9" stroke="#fff" strokeWidth="2" /></svg></CaptionButton>
        </CaptionButtons>
      </TitleBar>
      <MenuBar>
        {["File", "Edit", "View", "Camera", "Draw", "Tools", "Window", "Plugins", "Help"].map((m) => (
          <MenuItem key={m} type="button">{m}</MenuItem>
        ))}
      </MenuBar>
      <Toolbar role="toolbar" aria-label="Model">
        <Grip />
        <ToolSet tools={fileTools} /><ToolSeparator />
        <ToolSet tools={modelTools} /><ToolSeparator />
        <ToolSet tools={searchTools} /><ToolSeparator />
        <ToolSet tools={viewTools} /><ToolSeparator />
      </Toolbar>
      <Toolbar role="toolbar" aria-label="Rendering">
        <Grip />
        <ToolSet tools={renderTools} /><ToolSeparator />
        <ToolSet tools={wireTools} /><ToolSeparator />
      </Toolbar>
      <Workspace>
        <Sidebar>
          {sideTools.map((tools) => (
            <ToolGrid key={tools[0].name}><ToolSet tools={tools} /></ToolGrid>
          ))}
        </Sidebar>
        <Viewport>
          <Model />
          <Layers />
          <Materials />
        </Viewport>
      </Workspace>
      <StatusBar>
        <StatusIcons>
          <Badge><circle cx="11" cy="8" r="3" fill="#e8b0a0" stroke="#b08070" /><path d="M11 11v6" stroke="#b08070" /></Badge>
          <Badge><circle cx="11" cy="6" r="2" fill="#111" /><path d="M8 8h6v5h-1v5H9v-5H8z" fill="#111" /></Badge>
          <Badge><path d="M14 7a5 5 0 1 0 1 5h-3" stroke="#9c8058" strokeWidth="2" /></Badge>
        </StatusIcons>
        <svg width="22" height="22" viewBox="0 0 22 22"><circle cx="11" cy="11" r="9" fill="#cfe2f4" stroke="#2c4464" strokeWidth="2" /><text x="6" y="17" fontSize="16" fontWeight="bold">?</text></svg>
        <StatusText>Select object to match paint from</StatusText>
        <Measure>Measurements<MeasureInput aria-label="Measurements" /></Measure>
      </StatusBar>
    </AppWindow>
  );
}
